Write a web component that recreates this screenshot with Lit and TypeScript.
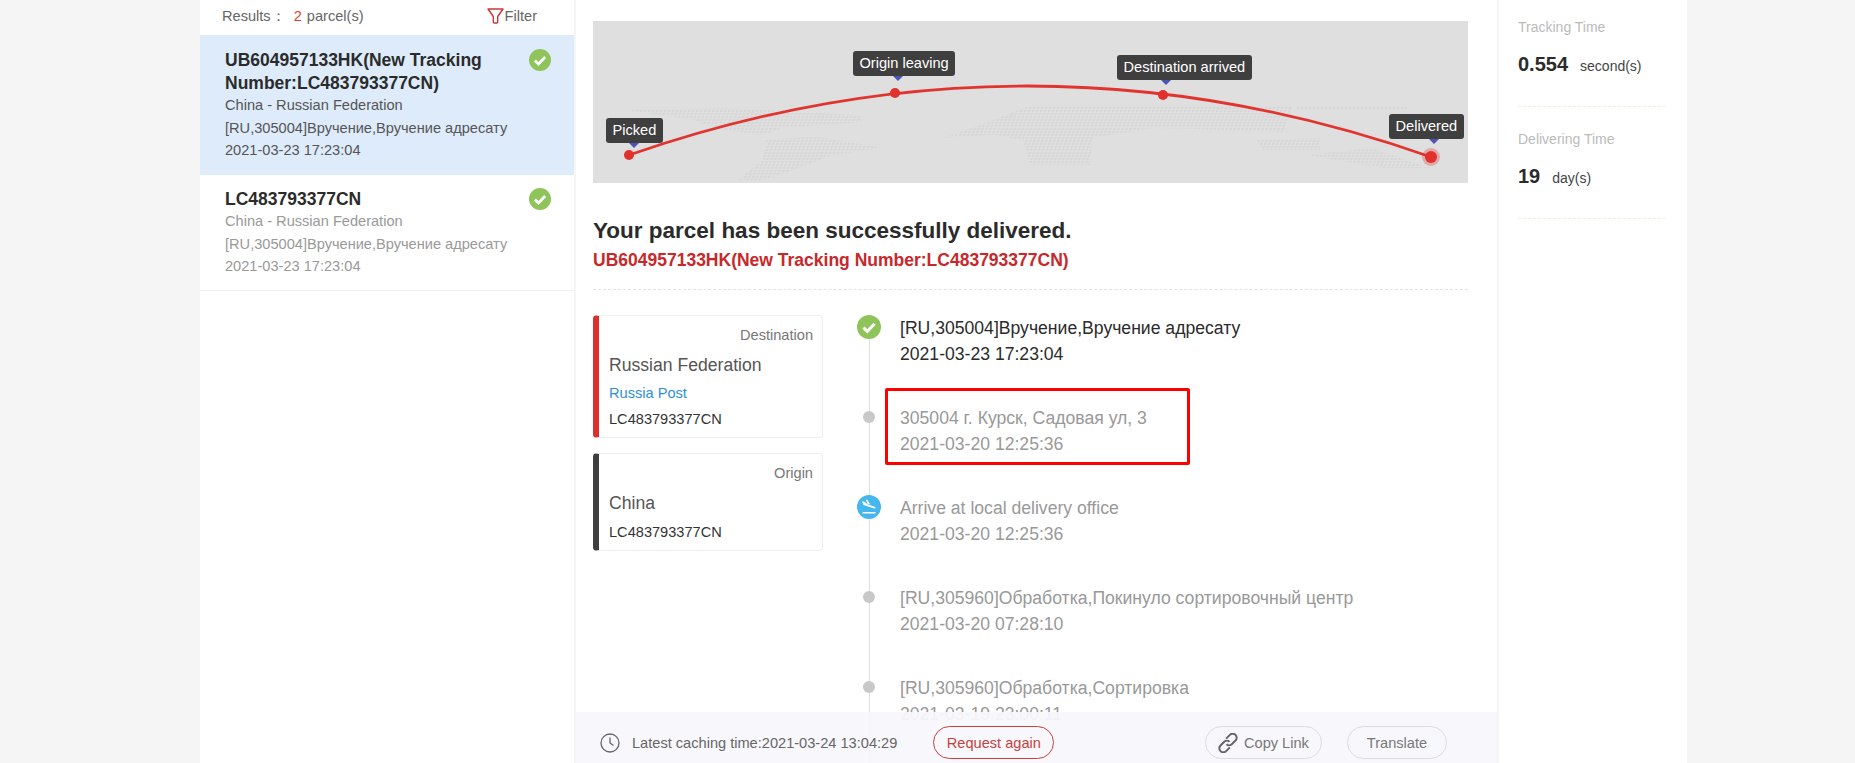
import { LitElement, css, html, svg } from 'lit';
import { customElement } from 'lit/decorators.js';

const checkIcon = (size: number) => html`
  <svg class="status-icon" width=${size} height=${size} viewBox="0 0 24 24">
    <circle cx="12" cy="12" r="12" fill="#8fc45a"></circle>
    <path d="M6.400 12.600l3.900 3.800 7.300-7.600" fill="none" stroke="#fff" stroke-width="3"></path>
  </svg>
`;

const planeIcon = html`
  <svg class="status-icon" width="24" height="24" viewBox="0 0 24 24">
    <circle cx="12" cy="12" r="12" fill="#46b6ee"></circle>
    <path d="M5 6.800l1.500-.5 4.400 3.300 4.500 1.300c1.200.4 3.300 1.200 3.300 2.200 0 .7-1.200.5-2.200.2L6.500 10z" fill="#fff"></path>
    <path d="M8.700 5l1.500-.4 3.100 5-2.500-.7z" fill="#fff"></path>
    <rect x="5.500" y="17" width="13" height="1.500" fill="#fff"></rect>
  </svg>
`;

const TIMELINE = [
  { text: '[RU,305004]Вручение,Вручение адресату', time: '2021-03-23 17:23:04', kind: 'done' },
  { text: '305004 г. Курск, Садовая ул, 3', time: '2021-03-20 12:25:36', kind: 'dot' },
  { text: 'Arrive at local delivery office', time: '2021-03-20 12:25:36', kind: 'plane' },
  { text: '[RU,305960]Обработка,Покинуло сортировочный центр', time: '2021-03-20 07:28:10', kind: 'dot' },
  { text: '[RU,305960]Обработка,Сортировка', time: '2021-03-19 23:00:11', kind: 'dot' },
];

const MAP_LABELS = [
  { text: 'Picked', x: 13, y: 97, tip: 28 },
  { text: 'Origin leaving', x: 260, y: 30, tip: 45 },
  { text: 'Destination arrived', x: 524, y: 34, tip: 49 },
  { text: 'Delivered', x: 796, y: 93, tip: 45 },
];

// grey patches of the world map, in map coordinates
const LAND = [
  'M35 90L130 88 266 95 270 102 190 108 170 115 130 110 100 100z',
  'M173 120L220 116 290 128 240 135 200 150 170 160 145 160 170 140z',
  'M350 118L400 100 437 86 700 86 690 112 640 110 560 108 500 118 497 145 437 145 430 120 400 115z',
  'M703 86L814 86 814 90 703 90z',
  'M663 120L727 118 727 130 670 130z',
  'M714 135L780 128 837 148 790 148z',
];

const routeMap = html`
  <svg class="route" width="875" height="162" viewBox="0 1 875 162">
    <defs>
      <pattern id="dots" width="4" height="3" patternUnits="userSpaceOnUse" patternTransform="skewX(-20)">
        <rect width="2.500" height="2" fill="#d0d0d0"></rect>
      </pattern>
    </defs>
    ${LAND.map((d) => svg`<path d=${d} fill="url(#dots)" opacity="0.6"></path>`)}
    <path d="M36 135Q437 -4 838 137" fill="none" stroke="#e2342f" stroke-width="2.800"></path>
    <circle cx="36" cy="135" r="5" fill="#e2302c"></circle>
    <circle cx="302" cy="73" r="5" fill="#e2302c"></circle>
    <circle cx="570" cy="75" r="5" fill="#e2302c"></circle>
    <circle cx="838" cy="137" r="9" fill="#e2302c" opacity="0.3"></circle>
    <circle cx="838" cy="137" r="6" fill="#e2302c"></circle>
  </svg>
`;

@customElement('app-root')
export class AppRoot extends LitElement {
  render() {
    return html`
      <div class="page">
        <aside class="results">
          <div class="results-head">
            <span>Results：<b>2</b>parcel(s)</span>
            <span class="filter">
              <svg width="17" height="16" viewBox="0 0 17 16">
                <path d="M1 1h15l-5.300 7.500v5.500a1 1 0 0 1-1 1h-2.400a1 1 0 0 1-1-1v-5.500z" fill="none" stroke="#d0343a" stroke-width="1.400" stroke-linejoin="round"></path>
              </svg>
              Filter
            </span>
          </div>
          <div class="parcel active">
            ${checkIcon(22)}
            <div class="parcel-title">UB604957133HK(New Tracking Number:LC483793377CN)</div>
            <div>China - Russian Federation</div>
            <div>[RU,305004]Вручение,Вручение адресату</div>
            <div>2021-03-23 17:23:04</div>
          </div>
          <div class="parcel">
            ${checkIcon(22)}
            <div class="parcel-title">LC483793377CN</div>
            <div>China - Russian Federation</div>
            <div>[RU,305004]Вручение,Вручение адресату</div>
            <div>2021-03-23 17:23:04</div>
          </div>
        </aside>

        <main class="detail">
          <div class="map">
            ${routeMap}
            ${MAP_LABELS.map(
              (l) => html`<div class="map-label" style="left:${l.x}px;top:${l.y}px">
                ${l.text}<i style="left:${l.tip - 5}px"></i>
              </div>`
            )}
          </div>
          <h1>Your parcel has been successfully delivered.</h1>
          <h2>UB604957133HK(New Tracking Number:LC483793377CN)</h2>
          <div class="columns">
            <div class="cards">
              <div class="card dest">
                <div class="card-kind">Destination</div>
                <div class="card-country">Russian Federation</div>
                <div class="card-link">Russia Post</div>
                <div class="card-no">LC483793377CN</div>
              </div>
              <div class="card">
                <div class="card-kind">Origin</div>
                <div class="card-country">China</div>
                <div class="card-no">LC483793377CN</div>
              </div>
            </div>
            <ul class="timeline">
              ${TIMELINE.map(
                (t, i) => html`<li class=${i === 0 ? 'first' : ''}>
                  <span class="marker">
                    ${t.kind === 'done' ? checkIcon(24) : t.kind === 'plane' ? planeIcon : html`<span class="dot"></span>`}
                  </span>
                  <div>${t.text}</div>
                  <div>${t.time}</div>
                  ${i === 1 ? html`<span class="highlight"></span>` : ''}
                </li>`
              )}
            </ul>
          </div>
          <footer class="bar">
            <svg class="clock" width="20" height="20" viewBox="0 0 20 20">
              <circle cx="10" cy="10" r="9" fill="none" stroke="#666" stroke-width="1.300"></circle>
              <path d="M10 4.500v5.500l3.500 2.500" fill="none" stroke="#666" stroke-width="1.300"></path>
            </svg>
            <span class="cached">Latest caching time:2021-03-24 13:04:29</span>
            <span class="btn red">Request again</span>
            <span class="spacer"></span>
            <span class="btn copy">
              <svg width="20" height="20" viewBox="1 1 16 16" fill="none" stroke="#666" stroke-width="1.600">
                <path d="M7.500 5.500l3-3a3 3 0 0 1 4.500 4.500l-3 3a3 3 0 0 1-4.200 0"></path>
                <path d="M10.500 12.500l-3 3a3 3 0 0 1-4.500-4.500l3-3a3 3 0 0 1 4.200 0"></path>
              </svg>
              Copy Link
            </span>
            <span class="btn translate">Translate</span>
          </footer>
        </main>

        <aside class="stats">
          <div class="stat">
            <div class="stat-label">Tracking Time</div>
            <div class="stat-value"><b>0.554</b>second(s)</div>
          </div>
          <div class="stat">
            <div class="stat-label">Delivering Time</div>
            <div class="stat-value"><b>19</b>day(s)</div>
          </div>
        </aside>
      </div>
    `;
  }

  static styles = css`
    :host {
      display: block;
      font-family: 'Liberation Sans', 'Noto Sans', sans-serif;
    }

    .page {
      display: flex;
      justify-content: flex-start;
      gap: 2px;
      height: 763px;
      padding-left: 200px;
      overflow: hidden;
      box-sizing: border-box;
      background: #f5f5f5;
    }

    .results {
      flex: none;
      width: 374px;
      background: #fff;
      font-size: 14.600px;
      color: #555;
    }

    .results-head {
      display: flex;
      justify-content: space-between;
      height: 35px;
      padding: 7px 37px 0 22px;
      box-sizing: border-box;
      line-height: 18px;
      color: #666;
    }

    .results-head b {
      margin: 0 5px 0 8px;
      font-weight: normal;
      color: #d9482b;
    }

    .filter {
      display: flex;
      align-items: center;
      gap: 1px;
      height: 18px;
    }

    .parcel {
      position: relative;
      padding: 13px 60px 12px 25px;
      border-bottom: 1px solid #f2f2f2;
      line-height: 22.500px;
      color: #999;
    }

    .parcel.active {
      padding: 14px 60px 13px 25px;
      border-bottom: 0;
      background: #deebfb;
      color: #555;
    }

    .parcel-title {
      font-size: 17.500px;
      font-weight: bold;
      color: #2b2b2b;
    }

    .parcel .status-icon {
      position: absolute;
      top: 13px;
      right: 23px;
    }

    .parcel.active .status-icon {
      top: 14px;
    }

    .detail {
      position: relative;
      flex: none;
      width: 921px;
      padding: 21px 29px 0 17px;
      box-sizing: border-box;
      background: #fff;
    }

    .map {
      position: relative;
      width: 875px;
      height: 162px;
      background: #dfdfdf;
    }

    .route {
      display: block;
    }

    .map-label {
      position: absolute;
      height: 25px;
      padding: 0 6.500px;
      border-radius: 3px;
      background: #3f3f3f;
      color: #fff;
      font-size: 14.600px;
      line-height: 25px;
      white-space: nowrap;
    }

    .map-label i {
      position: absolute;
      top: 25px;
      width: 10px;
      height: 5px;
      background: #4a55b5;
      clip-path: polygon(0 0, 100% 0, 50% 100%);
    }

    h1 {
      margin: 35px 0 0;
      font-size: 22.500px;
      line-height: 26px;
      color: #2b2b2b;
    }

    h2 {
      margin: 6px 0 0;
      padding-bottom: 19px;
      border-bottom: 1px dashed #e3e3e3;
      font-size: 17.500px;
      line-height: 20px;
      color: #c8282a;
    }

    .columns {
      display: flex;
      gap: 34px;
      margin-top: 25px;
    }

    .cards {
      display: flex;
      flex: none;
      flex-direction: column;
      gap: 14.500px;
      width: 230px;
    }

    .card {
      padding: 11px 9px 7px 10px;
      border: 1px solid #efefef;
      border-left: 6px solid #3f3f3f;
      border-radius: 4px;
      box-sizing: border-box;
      font-size: 14.600px;
      color: #333;
    }

    .card.dest {
      border-left-color: #db2f2b;
    }

    .card-kind {
      text-align: right;
      line-height: 16px;
      color: #777;
    }

    .card-country {
      margin-top: 11px;
      font-size: 17.600px;
      line-height: 22px;
      color: #555;
    }

    .card-link {
      margin-top: 9px;
      line-height: 16px;
      color: #2f8fd8;
    }

    .card-no {
      margin-top: 7px;
      line-height: 22px;
    }

    .timeline {
      position: relative;
      flex: 1;
      margin: 0;
      padding: 0;
      list-style: none;
      font-size: 17.600px;
      line-height: 26px;
      color: #999;
    }

    .timeline::before {
      content: '';
      position: absolute;
      top: 0;
      bottom: -100px;
      left: 11.500px;
      width: 1px;
      background: #e0e0e0;
    }

    .timeline li {
      position: relative;
      height: 52px;
      padding: 0 0 38px 43px;
    }

    .timeline li.first {
      color: #2b2b2b;
    }

    .marker {
      position: absolute;
      top: 0;
      left: 0;
      display: flex;
      align-items: center;
      justify-content: center;
      width: 24px;
      height: 24px;
    }

    .dot {
      width: 12px;
      height: 12px;
      border-radius: 50%;
      background: #c8c8c8;
    }

    .highlight {
      position: absolute;
      top: -17px;
      left: 28px;
      width: 305px;
      height: 77px;
      border: 3px solid #f00;
      border-radius: 2px;
      box-sizing: border-box;
    }

    .bar {
      position: absolute;
      right: 0;
      bottom: 0;
      left: 0;
      display: flex;
      align-items: center;
      height: 51px;
      padding: 10px 50px 0 24px;
      box-sizing: border-box;
      background: rgba(248, 248, 252, 0.93);
      font-size: 14.600px;
      color: #666;
    }

    .cached {
      margin-left: 12px;
    }

    .btn {
      display: flex;
      align-items: center;
      justify-content: center;
      height: 33px;
      border: 1px solid #ddd;
      border-radius: 17px;
      box-sizing: border-box;
      color: #777;
    }

    .btn.red {
      width: 121px;
      margin-left: 36px;
      border-color: #c9403c;
      color: #c9403c;
    }

    .spacer {
      flex: 1;
    }

    .btn.copy {
      justify-content: flex-start;
      gap: 6px;
      width: 117px;
      padding-left: 12px;
    }

    .btn.translate {
      width: 100px;
      margin-left: 25px;
    }

    .stats {
      flex: none;
      width: 188px;
      padding: 18px 21px 0 19px;
      box-sizing: border-box;
      background: #fff;
    }

    .stat {
      height: 88px;
      margin-bottom: 23px;
      border-bottom: 1px dashed #efefd5;
    }

    .stat-label {
      font-size: 14px;
      line-height: 18px;
      color: #bbb;
    }

    .stat-value {
      margin-top: 17px;
      font-size: 14px;
      line-height: 23px;
      color: #444;
    }

    .stat-value b {
      margin-right: 12px;
      font-size: 20px;
      color: #2b2b2b;
    }
  `;
}
